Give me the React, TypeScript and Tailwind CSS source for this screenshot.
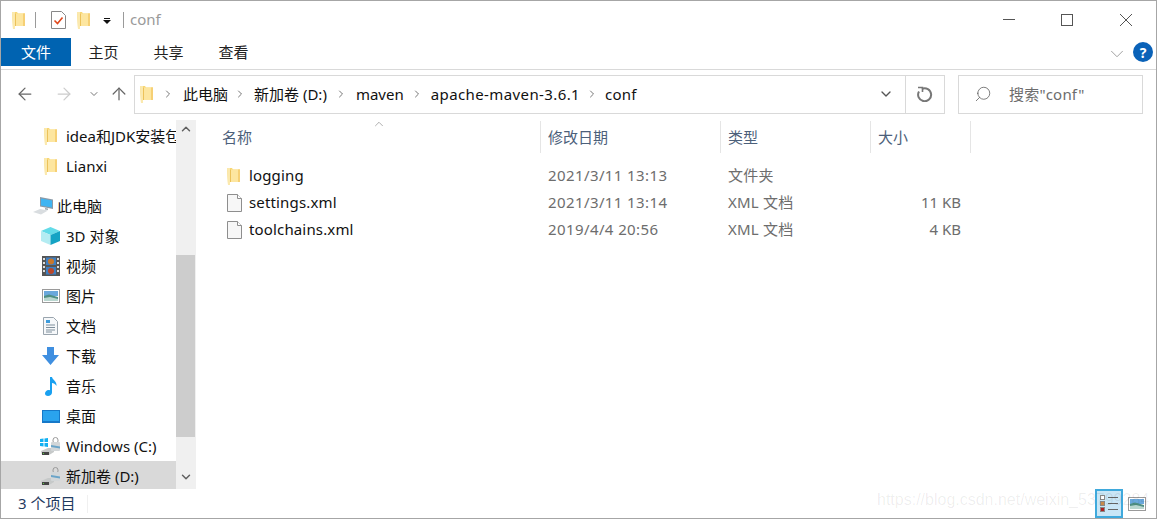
import React from "react";
import {
  ArrowLeft,
  ArrowRight,
  ArrowUp,
  ChevronDown,
  ChevronRight,
  ChevronUp,
  Search,
} from "lucide-react";

const fontStack = "font-['Noto_Sans','Noto_Sans_CJK_SC',sans-serif]";

const FolderIcon: React.FC = () => (
  <svg width="13" height="18" viewBox="0 0 13 18" className="shrink-0">
    <path d="M0 1h5l1 1.500h7V15H3v3H1z" fill="#f8d775" />
    <path d="M3 2.500h10V15H3z" fill="#fde6a0" />
    <path d="M0 1h3v17H1z" fill="#fbe9ae" />
    <path d="M3 2.500h1V15H3z" fill="#ecc25a" />
    <path d="M11 2.500h2V15h-2z" fill="#f6d075" />
  </svg>
);

const FileIcon: React.FC = () => (
  <svg width="15" height="18" viewBox="0 0 15 18" className="shrink-0">
    <path d="M.5.5h10l4 4v13H.5z" fill="#f7f7f7" stroke="#8e8e8e" />
    <path d="M10.500.5v4h4" fill="#fff" stroke="#8e8e8e" />
  </svg>
);

const PcIcon = () => (
  <svg width="22" height="18" viewBox="0 0 22 18">
    <path d="M7 0l13 2.500V12L7 9.500z" fill="#8a9aa8" />
    <path d="M8 1.500l11 2v7L8 8.500z" fill="#3fb4f2" />
    <path d="M0 15l7-3 8 1.500-7 4z" fill="#d9dde0" />
    <path d="M12 11l3 .5v1.500l-3-.5z" fill="#9aa5ae" />
  </svg>
);

const CubeIcon = () => (
  <svg width="19" height="18" viewBox="0 0 19 18">
    <path d="M9.500 0L19 4 9.500 8 0 4z" fill="#63dbe8" />
    <path d="M0 4l9.500 4v10L0 14z" fill="#b4ecf2" />
    <path d="M19 4L9.500 8v10l9.500-4z" fill="#14a3c4" />
  </svg>
);

const FilmIcon = () => (
  <svg width="18" height="20" viewBox="0 0 18 20">
    <rect width="18" height="20" fill="#555" />
    <rect x="4" y="1.500" width="10" height="7.500" fill="#3f7fc1" />
    <rect x="4" y="11" width="10" height="7.500" fill="#3f7fc1" />
    <circle cx="9" cy="5.500" r="3" fill="#c9772b" />
    <circle cx="9" cy="15" r="3" fill="#b9482b" />
    <path d="M1 2h2v2H1zM1 6h2v2H1zM1 10h2v2H1zM1 14h2v2H1zM15 2h2v2h-2zM15 6h2v2h-2zM15 10h2v2h-2zM15 14h2v2h-2z" fill="#ddd" />
  </svg>
);

const PictureIcon: React.FC = () => (
  <svg width="18" height="14" viewBox="0 0 18 14">
    <rect x=".5" y=".5" width="17" height="13" fill="#fff" stroke="#9a9a9a" />
    <rect x="2" y="2" width="14" height="5" fill="#6aa8dc" />
    <path d="M2 7l5-1.500L16 8v4H2z" fill="#4f8f83" />
    <path d="M2 9l6-1 8 2v2H2z" fill="#b9d6cf" />
  </svg>
);

const DocIcon = () => (
  <svg width="15" height="18" viewBox="0 0 15 18">
    <path d="M.5.5h10l4 4v13H.5z" fill="#f6f8fa" stroke="#9aa5ae" />
    <path d="M3 3h4v3H3z" fill="#3c9bdc" />
    <path d="M3 8h9M3 10.500h9M3 13h9M3 15h6" stroke="#7f8f9c" />
  </svg>
);

const DownloadIcon = () => (
  <svg width="17" height="18" viewBox="0 0 17 18">
    <path d="M5 0h7v8h5l-8.500 10L0 8h5z" fill="#3f8fe0" />
  </svg>
);

const MusicIcon = () => (
  <svg width="12" height="19" viewBox="0 0 12 19">
    <path d="M5 0h2c.4 3 5 4 4.500 9-1-2-3-3-4.500-3v9.500c0 2-2 3.500-4 3.500s-3-1-3-2.500S1.500 13 3.500 13c.6 0 1 .1 1.500.3z" fill="#19a0f0" />
  </svg>
);

const DesktopIcon = () => (
  <svg width="18" height="13" viewBox="0 0 18 13">
    <rect width="18" height="13" fill="#1678c8" />
    <rect x="1" y="1" width="16" height="10" fill="#2aa3ee" />
  </svg>
);

const DriveIcon: React.FC<{ win?: boolean }> = ({ win }) => (
  <svg width="21" height="19" viewBox="0 0 21 19">
    {win && <path d="M0 2l3.500-.5V5H0zM4.500 1.400L8 1v4H4.500zM0 6h3.500v3.500L0 9zM4.500 6H8v4l-3.500-.5z" fill="#12b0f2" />}
    <path d="M1 14l7-3h6v4l-5 3H2z" fill="#c6c9c9" />
    <path d="M2 15h7v3H2z" fill="#444" />
    <path d="M3 16h1v1H3z" fill="#5fd04a" />
    <rect x="13" y="0.500" width="5" height="6" rx="2.500" fill="none" stroke="#9a9a9a" />
    <rect x="11" y="5" width="9" height="9" rx="1" fill="#d2d6d8" />
    <path d="M11 8l9 1.500v2l-9-1.500z" fill="#6aa4c8" />
  </svg>
);

const NavRow: React.FC<{
  icon: React.ReactNode;
  label: string;
  selected?: boolean;
  pc?: boolean;
}> = ({ icon, label, selected, pc }) => (
  <div
    className={`flex h-[30px] shrink-0 items-center whitespace-nowrap text-[15px] text-[#111] ${pc ? "pl-[30px]" : "pl-[37px]"} ${selected ? "bg-[#d9d9d9]" : ""}`}
  >
    <span className="flex h-5 w-[25px] shrink-0 items-center justify-center">{icon}</span>
    <span className={pc ? "ml-[1px]" : "ml-[3px]"}>{label}</span>
  </div>
);

const Sidebar: React.FC = () => (
  <aside className="flex w-[195px] shrink-0 overflow-hidden">
    <nav className="flex w-[175px] flex-col overflow-hidden pt-[1px]">
      <NavRow icon={<FolderIcon />} label="idea和JDK安装包" />
      <NavRow icon={<FolderIcon />} label="Lianxi" />
      <div className="h-[10px] shrink-0" />
      <NavRow pc icon={<PcIcon />} label="此电脑" />
      <NavRow icon={<CubeIcon />} label="3D 对象" />
      <NavRow icon={<FilmIcon />} label="视频" />
      <NavRow icon={<PictureIcon />} label="图片" />
      <NavRow icon={<DocIcon />} label="文档" />
      <NavRow icon={<DownloadIcon />} label="下载" />
      <NavRow icon={<MusicIcon />} label="音乐" />
      <NavRow icon={<DesktopIcon />} label="桌面" />
      <NavRow icon={<DriveIcon win />} label="Windows (C:)" />
      <NavRow selected icon={<DriveIcon />} label="新加卷 (D:)" />
    </nav>
    <div className="flex w-[20px] flex-col bg-[#f0f0f0]">
      <div className="flex h-[17px] items-center justify-center text-[#606060]">
        <ChevronUp size={14} strokeWidth={2.5} />
      </div>
      <div className="mt-[118px] h-[182px] w-[19px] bg-[#cdcdcd]" />
      <div className="mt-auto flex h-[24px] items-center justify-center text-[#606060]">
        <ChevronDown size={14} strokeWidth={2.5} />
      </div>
    </div>
  </aside>
);

const files = [
  { name: "logging", date: "2021/3/11 13:13", type: "文件夹", size: "", folder: true },
  { name: "settings.xml", date: "2021/3/11 13:14", type: "XML 文档", size: "11 KB" },
  { name: "toolchains.xml", date: "2019/4/4 20:56", type: "XML 文档", size: "4 KB" },
];

const columns = [
  { label: "名称", width: "w-[325px]" },
  { label: "修改日期", width: "w-[180px]" },
  { label: "类型", width: "w-[150px]" },
  { label: "大小", width: "w-[100px]" },
];

const FileList: React.FC = () => (
  <main className="relative min-w-0 flex-1 pl-[20px]">
    <div className="relative flex h-[33px] pt-[1px] text-[15px] text-[#4c607a]">
      {columns.map((c, i) => (
        <div
          key={c.label}
          className={`${c.width} flex items-center border-r border-[#e5e5e5] ${i === 0 ? "pl-[6px]" : "pl-[7px]"}`}
        >
          {c.label}
        </div>
      ))}
      <ChevronUp
        size={14}
        strokeWidth={1}
        className="absolute left-[156px] -top-[3px] text-[#777]"
      />
    </div>
    <div className="mt-[9px] flex flex-col text-[15px]">
      {files.map((f) => (
        <div key={f.name} className="flex h-[27px] items-center">
          <div className="flex w-[325px] items-center pl-[11px] tracking-[0.15px] text-[#111]">
            <span className="flex w-[22px]">
              {f.folder ? <FolderIcon /> : <FileIcon />}
            </span>
            {f.name}
          </div>
          <div className="w-[180px] pl-[7px] tracking-[0.4px] text-[#6d6d6d]">{f.date}</div>
          <div className="w-[150px] pl-[7px] tracking-[0.2px] text-[#6d6d6d]">{f.type}</div>
          <div className="w-[90px] text-right text-[#6d6d6d]">{f.size}</div>
        </div>
      ))}
    </div>
  </main>
);

const StatusBar: React.FC = () => (
  <footer className="relative flex h-[29px] shrink-0 items-center text-[15px] text-[#1f3a5f]">
    <span className="pl-[17px] pb-[1px]">3 个项目</span>
    <div className="ml-[12px] h-[18px] w-px bg-[#f0f0f0]" />
    <div className="ml-auto flex items-center pr-[10px]">
      <div className="flex h-[29px] w-[28px] flex-col items-center justify-center gap-[1px] border-2 border-[#3fa9dc] bg-[#c9e6f6]">
        {["#8a8a8a", "#c98a4a", "#b02020"].map((c) => (
          <div key={c} className="flex items-center gap-[3px]">
            <span className="h-[5px] w-[5px] border border-[#888] bg-white" style={{ backgroundColor: c === "#8a8a8a" ? "#fff" : c }} />
            <span className="h-px w-[10px] bg-[#666]" />
          </div>
        ))}
      </div>
      <div className="ml-[5px]">
        <PictureIcon />
      </div>
    </div>
    <span className="absolute bottom-[6px] left-[876px] font-['Liberation_Sans',sans-serif] text-[16px] whitespace-nowrap text-[#00000012]">
      https://blog.csdn.net/weixin_53799284
    </span>
  </footer>
);

export default function App() {
  return (
    <div className={`flex h-[519px] w-[1157px] flex-col overflow-hidden border-x border-t border-b border-[#a6a6a6] bg-white ${fontStack}`}>
      {/* title bar */}
      <header className="flex h-[37px] shrink-0 items-center text-[#a0a0a0]">
        <div className="ml-[11px] flex items-center">
          <FolderIcon />
          <div className="ml-[10px] h-[16px] w-px bg-[#9a9a9a]" />
          <svg width="15" height="18" viewBox="0 0 15 18" className="ml-[15px]">
            <path d="M.5.5h10l4 4v13H.5z" fill="#fff" stroke="#888" />
            <path d="M3.500 9.500l3 3 5-6" fill="none" stroke="#e0481c" strokeWidth="1.600" />
          </svg>
          <span className="ml-[11px] flex"><FolderIcon /></span>
          <svg width="8" height="6" viewBox="0 0 8 6" className="ml-[13px] mt-[3px]">
            <path d="M0 2h8l-4 4z" fill="#111" />
            <path d="M1 .5h6" stroke="#111" />
          </svg>
          <div className="ml-[12px] h-[16px] w-px bg-[#9a9a9a]" />
          <span className="ml-[6px] text-[15px] text-[#9a9a9a]">conf</span>
        </div>
        <div className="ml-auto flex items-center">
          <svg width="12" height="12" viewBox="0 0 12 12" className="mr-[46px]">
            <path d="M0 5.500h12" stroke="#555" />
          </svg>
          <svg width="12" height="12" viewBox="0 0 12 12" className="mr-[47px]">
            <rect x=".5" y=".5" width="11" height="11" fill="none" stroke="#555" />
          </svg>
          <svg width="12" height="12" viewBox="0 0 12 12" className="mr-[24px]">
            <path d="M0 0l12 12M12 0L0 12" stroke="#555" />
          </svg>
        </div>
      </header>

      {/* ribbon tabs */}
      <div className="flex h-[32px] shrink-0 items-start border-b border-[#d9d9d9] text-[15px] text-[#222]">
        <div className="flex h-[28px] w-[70px] items-center justify-center bg-[#0063b1] text-white">文件</div>
        <div className="flex h-[28px] w-[65px] items-center justify-center">主页</div>
        <div className="flex h-[28px] w-[65px] items-center justify-center">共享</div>
        <div className="flex h-[28px] w-[65px] items-center justify-center">查看</div>
        <div className="ml-auto flex h-[28px] items-center pr-[3px]">
          <ChevronDown size={22} strokeWidth={1} className="mr-[5px] mt-[3px] text-[#999]" />
          <span className="flex h-[20px] w-[20px] items-center justify-center rounded-full bg-[#0a62b8] text-[14px] font-bold text-white">?</span>
        </div>
      </div>

      {/* address row */}
      <div className="flex h-[50px] shrink-0 items-center pb-[2px] text-[15px]">
        <ArrowLeft size={20} strokeWidth={1.5} className="ml-[14px] text-[#666]" />
        <ArrowRight size={20} strokeWidth={1.5} className="ml-[19px] text-[#ccc]" />
        <ChevronDown size={12} strokeWidth={2} className="ml-[14px] text-[#777]" />
        <ArrowUp size={20} strokeWidth={1.5} className="ml-[9px] text-[#666]" />
        <div className="ml-[5px] flex h-[39px] w-[811px] items-center border border-[#d9d9d9] text-[#111]">
          <span className="ml-[5px] flex"><FolderIcon /></span>
          <ChevronRight size={12} strokeWidth={2} className="ml-[9px] text-[#777]" />
          <span className="ml-[9px]">此电脑</span>
          <ChevronRight size={12} strokeWidth={2} className="ml-[6px] text-[#777]" />
          <span className="ml-[8px]">新加卷 (D:)</span>
          <ChevronRight size={12} strokeWidth={2} className="ml-[8px] text-[#777]" />
          <span className="ml-[9px]">maven</span>
          <ChevronRight size={12} strokeWidth={2} className="ml-[7px] text-[#777]" />
          <span className="ml-[8px] tracking-[0.4px]">apache-maven-3.6.1</span>
          <ChevronRight size={12} strokeWidth={2} className="ml-[6px] text-[#777]" />
          <span className="ml-[7px] tracking-[0.2px]">conf</span>
          <ChevronDown size={16} strokeWidth={2} className="ml-auto mr-[11px] text-[#555]" />
          <div className="flex h-full w-[39px] items-center justify-center border-l border-[#d9d9d9]">
            <svg width="16" height="16" viewBox="0 0 16 16" fill="none" stroke="#777" strokeWidth="2">
              <path d="M5 2.800A6.500 6.500 0 1 1 2 5.500" />
              <path d="M1 1.500h4.500V6" strokeWidth="1.600" />
            </svg>
          </div>
        </div>
        <div className="ml-[13px] flex h-[39px] w-[185px] items-center border border-[#d9d9d9] text-[#6d6d6d]">
          <Search size={18} strokeWidth={1} className="ml-[15px] -scale-x-100 text-[#555]" />
          <span className="ml-[17px] tracking-[0.2px]">搜索"conf"</span>
        </div>
      </div>

      <div className="flex min-h-0 flex-1">
        <Sidebar />
        <FileList />
      </div>

      <StatusBar />
    </div>
  );
}
